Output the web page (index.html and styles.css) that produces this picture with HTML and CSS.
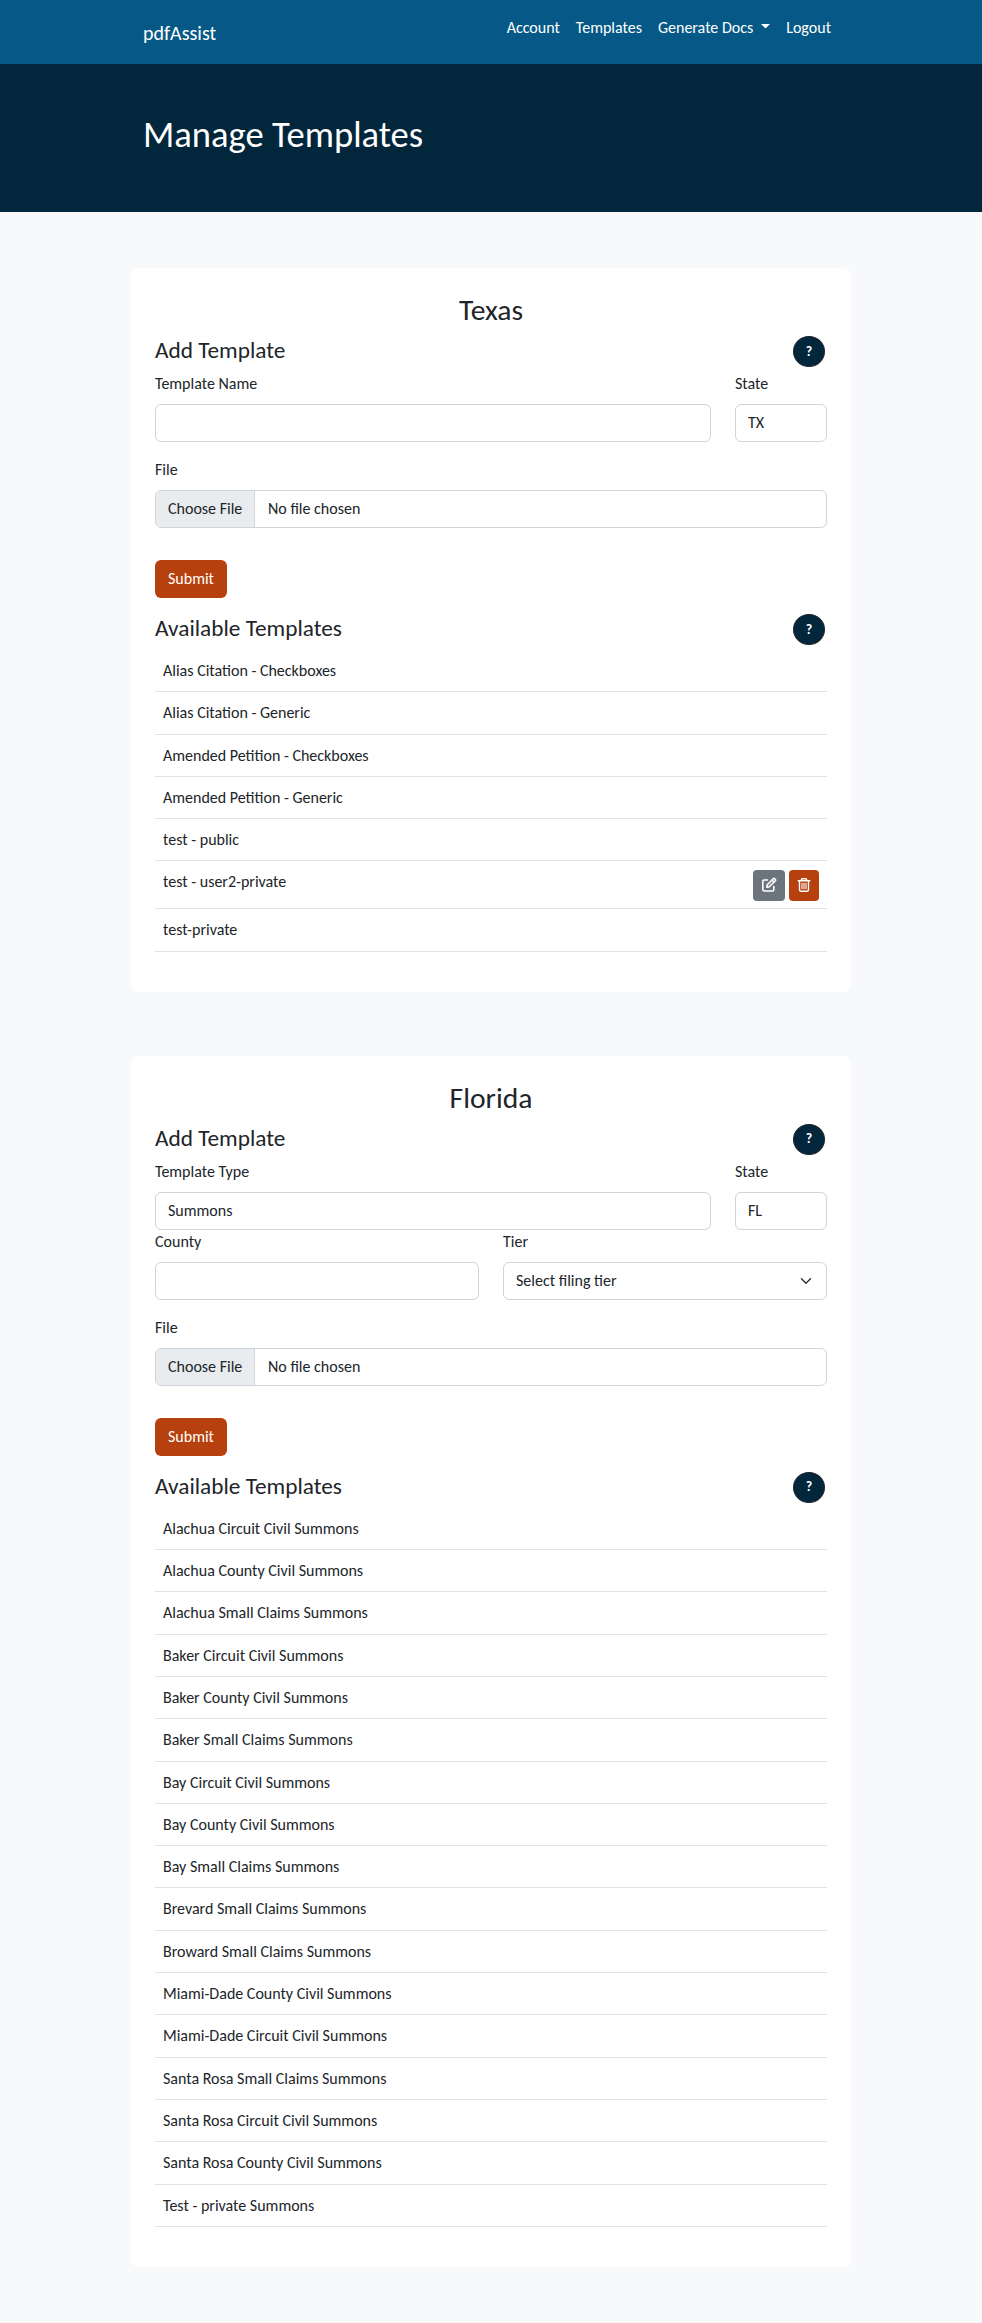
FILE: index.html
```html
<!DOCTYPE html>
<html lang="en">
<head>
<meta charset="utf-8">
<title>Manage Templates</title>
<link rel="stylesheet" href="styles.css">
</head>
<body>
<nav class="navbar">
  <div class="container navbar-inner">
    <a class="brand">pdfAssist</a>
    <div class="nav-links">
      <a>Account</a>
      <a>Templates</a>
      <a class="dropdown">Generate Docs<span class="caret"></span></a>
      <a>Logout</a>
    </div>
  </div>
</nav>
<header class="banner"><div class="container"><h1>Manage Templates</h1></div></header>
<main>
  <section class="card">
    <h2>Texas</h2>
    <div class="title-row"><h3>Add Template</h3><button class="help">?</button></div>
    <div class="form-row name-state">
      <div><label>Template Name</label><div class="control"></div></div>
      <div><label>State</label><div class="control">TX</div></div>
    </div>
    <div class="form-row file-row">
      <div><label>File</label><div class="control file"><span class="choose">Choose File</span><span>No file chosen</span></div></div>
    </div>
    <button class="submit">Submit</button>
    <div class="title-row available"><h3>Available Templates</h3><button class="help">?</button></div>
    <ul class="templates">
      <li>Alias Citation - Checkboxes</li>
      <li>Alias Citation - Generic</li>
      <li>Amended Petition - Checkboxes</li>
      <li>Amended Petition - Generic</li>
      <li>test - public</li>
      <li class="owned">test - user2-private
        <span class="actions">
          <button class="edit"><svg width="16" height="16" viewBox="0 0 16 16" fill="none" stroke="#fff" stroke-width="1.6" stroke-linecap="round" stroke-linejoin="round"><path d="M6.5 3H3.2Q1.8 3 1.8 4.4V12.6Q1.8 14 3.2 14H11.4Q12.8 14 12.8 12.6V9.6"/><path d="M5.8 10.2 6.3 7.7 12.3 1.7Q13 1 13.8 1.8L14.2 2.2Q15 3 14.3 3.7L8.3 9.7Z"/><path d="M11 3 13 5"/></svg></button>
          <button class="delete"><svg width="14" height="16" viewBox="0 0 14 16" fill="none" stroke="#fff" stroke-width="1.4" stroke-linecap="round" stroke-linejoin="round"><path d="M1.2 3.7H12.8M4 3.5 5 1.7H9L10 3.5M2.5 4V12.8Q2.5 14.2 3.9 14.2H10.1Q11.5 14.2 11.5 12.8V4"/><path stroke-width="1.1" d="M5 6.2V11.8M7 6.2V11.8M9 6.2V11.8"/></svg></button>
        </span>
      </li>
      <li>test-private</li>
    </ul>
  </section>

  <section class="card">
    <h2>Florida</h2>
    <div class="title-row"><h3>Add Template</h3><button class="help">?</button></div>
    <div class="form-row name-state">
      <div><label>Template Type</label><div class="control">Summons</div></div>
      <div><label>State</label><div class="control">FL</div></div>
    </div>
    <div class="form-row halves">
      <div><label>County</label><div class="control"></div></div>
      <div><label>Tier</label><div class="control select">Select filing tier<svg width="16" height="12" viewBox="0 0 16 16" fill="none" stroke="#343a40" stroke-width="2" stroke-linecap="round" stroke-linejoin="round"><path d="m2 5 6 6 6-6"/></svg></div></div>
    </div>
    <div class="form-row file-row">
      <div><label>File</label><div class="control file"><span class="choose">Choose File</span><span>No file chosen</span></div></div>
    </div>
    <button class="submit">Submit</button>
    <div class="title-row available"><h3>Available Templates</h3><button class="help">?</button></div>
    <ul class="templates">
      <li>Alachua Circuit Civil Summons</li>
      <li>Alachua County Civil Summons</li>
      <li>Alachua Small Claims Summons</li>
      <li>Baker Circuit Civil Summons</li>
      <li>Baker County Civil Summons</li>
      <li>Baker Small Claims Summons</li>
      <li>Bay Circuit Civil Summons</li>
      <li>Bay County Civil Summons</li>
      <li>Bay Small Claims Summons</li>
      <li>Brevard Small Claims Summons</li>
      <li>Broward Small Claims Summons</li>
      <li>Miami-Dade County Civil Summons</li>
      <li>Miami-Dade Circuit Civil Summons</li>
      <li>Santa Rosa Small Claims Summons</li>
      <li>Santa Rosa Circuit Civil Summons</li>
      <li>Santa Rosa County Civil Summons</li>
      <li>Test - private Summons</li>
    </ul>
  </section>
</main>
</body>
</html>
```
FILE: styles.css
```css
* { box-sizing: border-box; }
body {
  margin: 0;
  background: #f8f9fb;
  color: #212529;
  font-family: Calibri, Carlito, Lato, sans-serif;
  font-size: 16px;
  line-height: 24px;
  white-space: nowrap;
}
h1, h2, h3, ul { margin: 0; padding: 0; font-weight: 400; }
button { border: 0; margin: 0; padding: 0; font: inherit; color: #fff; }
svg { display: block; }
.container { width: 720px; margin: 0 auto; padding: 0 12px; }
.navbar { height: 64px; background: #065886; color: #fff; }
.navbar-inner { display: flex; justify-content: space-between; align-items: flex-start; }
.brand { font-size: 20px; line-height: 30px; padding-top: 18px; }
.nav-links { display: flex; gap: 16px; padding: 16px 8px 0 0; }
.dropdown { display: flex; }
.caret {
  margin: 8px 0 0 8px;
  width: 9px;
  height: 5px;
  border-left: 4.5px solid transparent;
  border-right: 4.5px solid transparent;
  border-top: 4.5px solid #fff;
}
.banner { height: 148px; background: #02263b; color: #fff; padding-top: 48px; }
.banner h1 { font-size: 36.6px; line-height: 45px; }
main { width: 720px; margin: 56px auto 0; }
.card { background: #fff; border-radius: 8px; padding: 24px 24px 40px; margin-bottom: 64px; }
.card:last-child { margin-bottom: 55px; }
.card h2 { height: 38px; font-size: 29.6px; line-height: 36px; text-align: center; }
.title-row { display: flex; justify-content: space-between; height: 42px; padding: 6px 2px 0 0; }
.title-row h3 { font-size: 23.3px; line-height: 29px; }
.help {
  width: 32px;
  height: 31px;
  border: 1px solid #212529;
  border-radius: 50%;
  background: #02263b;
  font-size: 14px;
  font-weight: 600;
}
.form-row { display: grid; gap: 24px; }
.name-state { grid-template-columns: 556px 92px; }
.halves { grid-template-columns: 1fr 1fr; }
.file-row { margin-top: 16px; }
label { display: block; height: 32px; }
.control {
  display: flex;
  align-items: center;
  height: 38px;
  padding: 0 12px;
  border: 1px solid #ced4da;
  border-radius: 6px;
  background: #fff;
  overflow: hidden;
}
.select { justify-content: space-between; }
.file { padding-left: 0; gap: 13px; }
.choose { width: 99px; padding-left: 12px; line-height: 36px; background: #e9ecef; border-right: 1px solid #ced4da; }
.submit {
  display: block;
  width: 72px;
  height: 38px;
  margin-top: 32px;
  border-radius: 6px;
  background: #b7410e;
}
.available { height: 52px; padding-top: 16px; }
.templates { list-style: none; }
.templates li {
  display: flex;
  justify-content: space-between;
  height: 42.3px;
  padding: 9px 8px 0;
  border-bottom: 1px solid #dee2e6;
}
.templates .owned { height: 48px; }
.actions { display: flex; gap: 4px; margin-top: -0.5px; }
.actions button { display: flex; align-items: center; justify-content: center; height: 31px; border-radius: 4px; }
.edit { width: 32px; background: #6c757d; }
.delete { width: 30px; background: #b7410e; }
```
